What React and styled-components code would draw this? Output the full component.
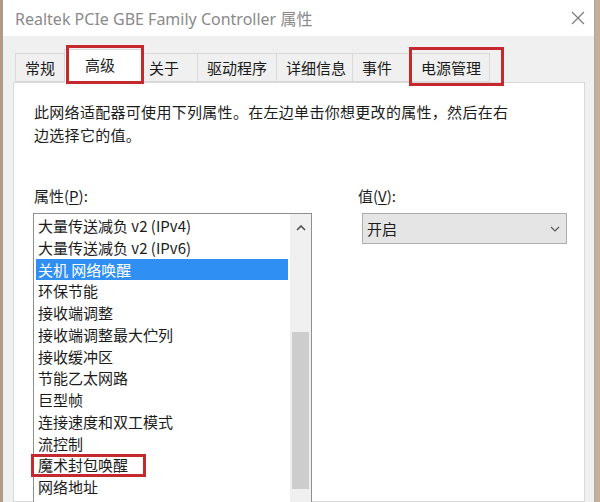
import React from "react";
import styled, { createGlobalStyle } from "styled-components";

const CJK = `"Noto Sans CJK SC", "Noto Sans", sans-serif`;
const UI = `"Noto Sans", "Noto Sans CJK SC", sans-serif`;

const Global = createGlobalStyle`
  html, body { margin: 0; padding: 0; width: 600px; height: 502px; overflow: hidden; background: #b89c82; }
  #root { width: 600px; height: 502px; }
`;

const Desktop = styled.div`
  width: 600px;
  height: 502px;
  box-sizing: border-box;
  padding-left: 2px;
  display: flex;
  overflow: hidden;
  background: linear-gradient(90deg, #b69a80 0%, #c7ae96 100%);
`;

const Window = styled.div`
  width: 593px;
  height: 502px;
  box-sizing: border-box;
  border-left: 1px solid #9e9e9e;
  border-right: 1px solid #a8a8a8;
  background: #f0f0f0;
  display: flex;
  flex-direction: column;
`;

const TitleBar = styled.div`
  height: 36px;
  flex: none;
  background: #ffffff;
  display: flex;
  align-items: center;
  justify-content: space-between;
  padding: 0 9px 0 12px;
`;

const Title = styled.div`
  font-family: ${UI};
  font-size: 16px;
  color: #8a8a8a;
  white-space: nowrap;
`;

const CloseIcon = styled.svg`
  width: 14px;
  height: 14px;
  display: block;
`;

const Body = styled.div`
  flex: 1;
  display: flex;
  flex-direction: column;
  padding: 13px 9px 0 10px;
  min-height: 0;
`;

const TabStrip = styled.div`
  display: flex;
  align-items: flex-end;
  height: 33px;
  padding-left: 2px;
  position: relative;
  z-index: 1;
  flex: none;
`;

const Tab = styled.div`
  position: relative;
  box-sizing: border-box;
  width: ${(p) => p.$w}px;
  height: ${(p) => (p.$active ? 34 : 29)}px;
  line-height: ${(p) => (p.$active ? 29 : 27)}px;
  margin-left: ${(p) => (p.$first ? 0 : p.$active ? -3 : -1)}px;
  margin-right: ${(p) => (p.$active ? -2 : 0)}px;
  margin-bottom: ${(p) => (p.$active ? -1 : 0)}px;
  padding-left: ${(p) => (p.$active ? 20 : 9)}px;
  border: 1px solid #d9d9d9;
  border-bottom: ${(p) => (p.$active ? "none" : "1px solid #d9d9d9")};
  background: ${(p) => (p.$active ? "#ffffff" : "#f0f0f0")};
  z-index: ${(p) => (p.$active ? 2 : 1)};
  font-family: ${CJK};
  font-size: 15px;
  color: #1b1b1b;
  white-space: nowrap;
`;

const Mark = styled.span`
  position: absolute;
  box-sizing: border-box;
  left: ${(p) => p.$l}px;
  top: ${(p) => p.$t}px;
  width: ${(p) => p.$w}px;
  height: ${(p) => p.$h}px;
  border: 3px solid #c5282e;
  pointer-events: none;
  z-index: 5;
`;

const Panel = styled.div`
  flex: 1;
  background: #ffffff;
  border: 1px solid #d9d9d9;
  padding: 17px 0 0 19px;
  display: flex;
  flex-direction: column;
  min-height: 0;
`;

const Description = styled.p`
  margin: 0;
  padding-left: 1px;
  font-family: ${CJK};
  font-size: 15px;
  letter-spacing: 0.3px;
  line-height: 23px;
  color: #1b1b1b;
`;

const Fields = styled.div`
  display: grid;
  grid-template-columns: 279px 210px;
  column-gap: 45px;
  margin-top: 40px;
  align-items: start;
`;

const Column = styled.div`
  display: flex;
  flex-direction: column;
`;

const Label = styled.div`
  font-family: ${CJK};
  font-size: 15px;
  line-height: 20px;
  color: #1b1b1b;
  margin-bottom: 7px;
  padding-left: 1px;
  u {
    text-decoration: underline;
    text-underline-offset: 2px;
  }
`;

const ListBox = styled.div`
  box-sizing: border-box;
  height: 310px;
  border: 1px solid #8e8f8f;
  background: #ffffff;
  display: flex;
`;

const Items = styled.div`
  flex: 1;
  padding: 1px 2px;
  display: flex;
  flex-direction: column;
`;

const Row = styled.div`
  position: relative;
  height: 21.75px;
  line-height: 21.75px;
  padding-left: 2px;
  font-family: ${CJK};
  font-size: 15px;
  white-space: nowrap;
  color: ${(p) => (p.$selected ? "#ffffff" : "#1b1b1b")};
  background: ${(p) => (p.$selected ? "#2f8ff2" : "transparent")};
`;

const ScrollBar = styled.div`
  width: 21px;
  flex: none;
  background: #f0f0f0;
  display: flex;
  flex-direction: column;
  align-items: center;
`;

const ArrowButton = styled.div`
  height: 26px;
  width: 100%;
  display: flex;
  align-items: center;
  justify-content: center;
  padding-top: 1px;
  box-sizing: border-box;
`;

const Thumb = styled.div`
  width: 17px;
  margin-top: ${(p) => p.$top}px;
  height: ${(p) => p.$h}px;
  background: #cdcdcd;
`;

const Select = styled.div`
  box-sizing: border-box;
  margin-left: 5px;
  width: 205px;
  height: 31px;
  background: #e5e5e5;
  border: 1px solid #adadad;
  display: flex;
  align-items: center;
  justify-content: space-between;
  padding: 0 6px 0 4px;
  font-family: ${CJK};
  font-size: 15px;
  color: #1b1b1b;
`;

const tabs = [
  { label: "常规", w: 52 },
  { label: "高级", w: 78, active: true, mark: { l: 1, t: -5, w: 78, h: 39 } },
  { label: "关于", w: 59 },
  { label: "驱动程序", w: 80 },
  { label: "详细信息", w: 77 },
  { label: "事件", w: 60 },
  { label: "电源管理", w: 79, mark: { l: -3, t: -7, w: 95, h: 39 } },
];

const rows = [
  "大量传送减负 v2 (IPv4)",
  "大量传送减负 v2 (IPv6)",
  "关机 网络唤醒",
  "环保节能",
  "接收端调整",
  "接收端调整最大伫列",
  "接收缓冲区",
  "节能乙太网路",
  "巨型帧",
  "连接速度和双工模式",
  "流控制",
  "魔术封包唤醒",
  "网络地址",
];

export default function App() {
  return (
    <>
      <Global />
      <Desktop>
        <Window>
          <TitleBar>
            <Title>Realtek PCIe GBE Family Controller 属性</Title>
            <CloseIcon viewBox="0 0 14 14">
              <path d="M1 1 L13 13 M13 1 L1 13" stroke="#7c7c7c" strokeWidth="1.2" fill="none" />
            </CloseIcon>
          </TitleBar>
          <Body>
            <TabStrip>
              {tabs.map((t, i) => (
                <Tab key={t.label} $w={t.w} $active={t.active} $first={i === 0}>
                  {t.label}
                  {t.mark && <Mark $l={t.mark.l} $t={t.mark.t} $w={t.mark.w} $h={t.mark.h} />}
                </Tab>
              ))}
            </TabStrip>
            <Panel>
              <Description>
                此网络适配器可使用下列属性。在左边单击你想更改的属性，然后在右
                <br />
                边选择它的值。
              </Description>
              <Fields>
                <Column>
                  <Label>
                    属性(<u>P</u>):
                  </Label>
                  <ListBox>
                    <Items>
                      {rows.map((r, i) => (
                        <Row key={r} $selected={i === 2}>
                          {r}
                          {i === 11 && <Mark $l={-5} $t={0} $w={115} $h={23} />}
                        </Row>
                      ))}
                    </Items>
                    <ScrollBar>
                      <ArrowButton>
                        <svg width="10" height="6" viewBox="0 0 10 6">
                          <path d="M1 5 L5 1 L9 5" stroke="#505050" strokeWidth="1.6" fill="none" />
                        </svg>
                      </ArrowButton>
                      <Thumb $top={92} $h={157} />
                    </ScrollBar>
                  </ListBox>
                </Column>
                <Column>
                  <Label>
                    值(<u>V</u>):
                  </Label>
                  <Select>
                    <span>开启</span>
                    <svg width="10" height="6" viewBox="0 0 10 6">
                      <path d="M1 1 L5 5 L9 1" stroke="#555" strokeWidth="1.1" fill="none" />
                    </svg>
                  </Select>
                </Column>
              </Fields>
            </Panel>
          </Body>
        </Window>
      </Desktop>
    </>
  );
}
